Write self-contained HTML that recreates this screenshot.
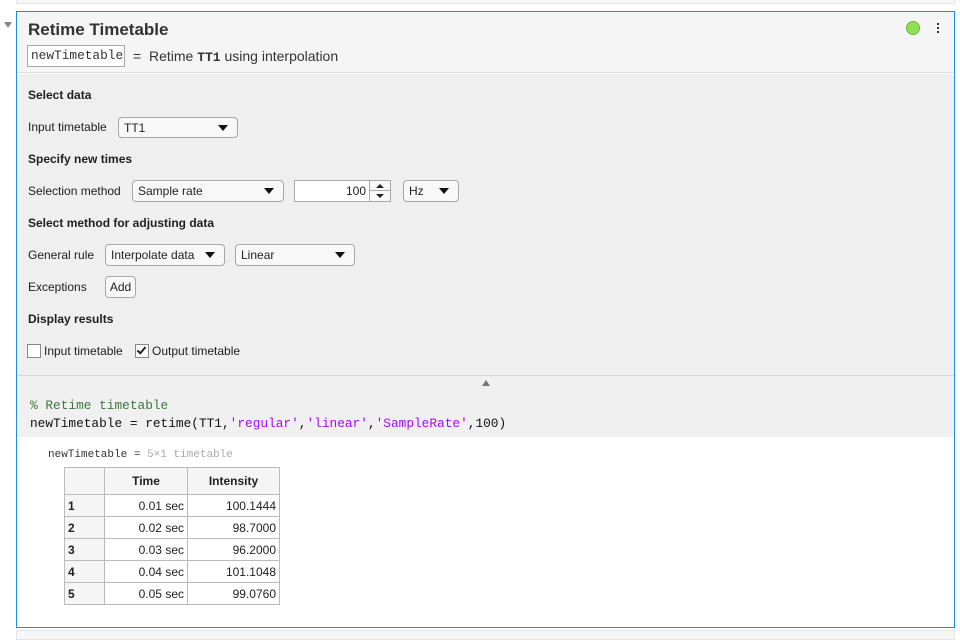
<!DOCTYPE html>
<html><head><style>
*{box-sizing:border-box;margin:0;padding:0}
body{width:960px;height:640px;background:#fff;position:relative;font-family:"Liberation Sans",Arial,sans-serif;color:#212121;overflow:hidden}
.a{position:absolute}
.lbl{position:absolute;font-size:12px;line-height:14px}
.b{font-weight:bold}
.dd{position:absolute;border:1px solid #a8a8a8;border-radius:4px;background:#f8f8f8;font-size:12px;line-height:20px;padding-left:5px}
.dd:after{content:"";position:absolute;right:9px;top:7px;border-left:5px solid transparent;border-right:5px solid transparent;border-top:6px solid #111}
.mono{font-family:"Liberation Mono","DejaVu Sans Mono",monospace}
table{position:absolute;left:64px;top:467px;border-collapse:collapse;font-size:12px;border:1px solid #aaa}
td,th{border:1px solid #bbb;height:22px;padding:0 3px}
th{height:27px;background:#f5f5f5;font-weight:bold;text-align:center}
td{text-align:right}
td:first-child{text-align:left;font-weight:bold;background:#f5f5f5}
</style></head><body>
<div class="a" style="left:16px;top:0;width:939px;height:4px;border:1px solid #e4e4e4;border-top:none;background:#f7f7f7"></div>
<div class="a" style="left:4px;top:22px;border-left:4px solid transparent;border-right:4px solid transparent;border-top:6px solid #888"></div>
<div class="a" style="left:16px;top:11px;width:939px;height:617px;border:1px solid #1a8fe3;background:#fff"></div>
<div class="a" style="left:17px;top:12px;width:937px;height:61px;background:#f5f5f5;border-bottom:1px solid #dcdcdc"></div>
<div class="a" style="left:17px;top:74px;width:937px;height:302px;background:#efefef;border-bottom:1px solid #d8d8d8"></div>
<div class="a" style="left:17px;top:376px;width:937px;height:61px;background:#f0f0f0"></div>
<div class="a b" style="left:28px;top:20px;font-size:17px;color:#333">Retime Timetable</div>
<div class="a mono" style="left:27px;top:45px;width:98px;height:22px;border:1px solid #aaa;background:#fff;font-size:12.8px;line-height:20px;padding-left:3px;color:#333">newTimetable</div>
<div class="a" style="left:133px;top:48px;font-size:14px;color:#333">=&nbsp; Retime <span class="mono b" style="font-size:13px">TT1</span> using interpolation</div>
<div class="a" style="left:906px;top:21px;width:14px;height:14px;border-radius:50%;background:#8fdf55;border:1px solid #6cb83c"></div>
<div class="a" style="left:937px;top:23px;width:2px;height:2px;background:#333;box-shadow:0 4px #333,0 8px #333"></div>
<div class="lbl b" style="left:28px;top:88px">Select data</div>
<div class="lbl" style="left:28px;top:120px">Input timetable</div>
<div class="dd" style="left:118px;top:117px;width:120px;height:21px">TT1</div>
<div class="lbl b" style="left:28px;top:152px">Specify new times</div>
<div class="lbl" style="left:28px;top:184px">Selection method</div>
<div class="dd" style="left:132px;top:180px;width:152px;height:22px">Sample rate</div>
<div class="a" style="left:294px;top:180px;width:97px;height:22px;border:1px solid #a8a8a8;background:#fff;font-size:12px;line-height:20px">
<span style="position:absolute;right:24px">100</span>
<div class="a" style="left:74px;top:0;width:21px;height:20px;border-left:1px solid #a8a8a8;background:#f8f8f8">
<div class="a" style="left:0;top:9px;width:20px;height:1px;background:#a8a8a8"></div>
<div class="a" style="left:6px;top:3px;border-left:4px solid transparent;border-right:4px solid transparent;border-bottom:4px solid #222"></div>
<div class="a" style="left:6px;top:13px;border-left:4px solid transparent;border-right:4px solid transparent;border-top:4px solid #222"></div></div></div>
<div class="dd" style="left:403px;top:180px;width:56px;height:22px">Hz</div>
<div class="lbl b" style="left:28px;top:216px">Select method for adjusting data</div>
<div class="lbl" style="left:28px;top:248px">General rule</div>
<div class="dd" style="left:105px;top:244px;width:120px;height:22px">Interpolate data</div>
<div class="dd" style="left:235px;top:244px;width:120px;height:22px">Linear</div>
<div class="lbl" style="left:28px;top:280px">Exceptions</div>
<div class="a" style="left:105px;top:276px;width:31px;height:22px;border:1px solid #a8a8a8;border-radius:4px;background:#f8f8f8;font-size:12px;line-height:20px;text-align:center">Add</div>
<div class="lbl b" style="left:28px;top:312px">Display results</div>
<div class="a" style="left:27px;top:344px;width:14px;height:14px;border:1px solid #888;background:#fff"></div>
<div class="lbl" style="left:44px;top:344px">Input timetable</div>
<div class="a" style="left:135px;top:344px;width:14px;height:14px;border:1px solid #888;background:#fff"><div class="a" style="left:3px;top:0px;width:5px;height:9px;border-right:2px solid #222;border-bottom:2px solid #222;transform:rotate(40deg)"></div></div>
<div class="lbl" style="left:152px;top:344px">Output timetable</div>
<div class="a" style="left:482px;top:380px;border-left:4px solid transparent;border-right:4px solid transparent;border-bottom:6px solid #777"></div>
<div class="a mono" style="left:30px;top:397px;font-size:12.8px;line-height:18px;white-space:pre;color:#111"><span style="color:#3c763d">% Retime timetable</span>
newTimetable = retime(TT1,<span style="color:#a709f5">'regular'</span>,<span style="color:#a709f5">'linear'</span>,<span style="color:#a709f5">'SampleRate'</span>,100)</div>
<div class="a mono" style="left:48px;top:449px;font-size:11px;color:#333">newTimetable = <span style="color:#aaa">5×1 timetable</span></div>
<table>
<tr><th style="width:40px"></th><th style="width:83px">Time</th><th style="width:92px">Intensity</th></tr>
<tr><td>1</td><td>0.01 sec</td><td>100.1444</td></tr>
<tr><td>2</td><td>0.02 sec</td><td>98.7000</td></tr>
<tr><td>3</td><td>0.03 sec</td><td>96.2000</td></tr>
<tr><td>4</td><td>0.04 sec</td><td>101.1048</td></tr>
<tr><td>5</td><td>0.05 sec</td><td>99.0760</td></tr>
</table>
<div class="a" style="left:16px;top:630px;width:939px;height:10px;border:1px solid #e4e4e4;background:#f7f7f7"></div>
</body></html>
